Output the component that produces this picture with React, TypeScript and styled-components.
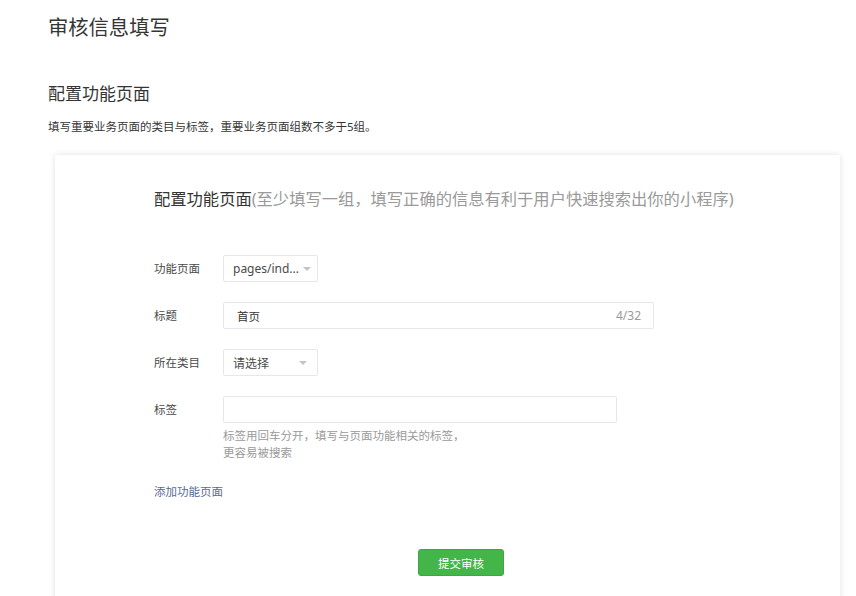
import React from "react"
import styled, { createGlobalStyle } from "styled-components"

const GlobalStyle = createGlobalStyle`
    body {
        margin: 0;
        background: #fff;
        font-family: "Noto Sans", "Noto Sans CJK SC", sans-serif;
        color: #353535;
    }
`

const Page = styled.div`
    padding: 13px 16px 0 48px;
    width: 856px;
    box-sizing: border-box;
`

const PageTitle = styled.h1`
    margin: 0;
    font-size: 20.3px;
    line-height: 28px;
    font-weight: 400;
    color: #353535;
`

const SectionTitle = styled.h2`
    margin: 41px 0 0 0;
    font-size: 17px;
    line-height: 24px;
    font-weight: 400;
    color: #353535;
`

const SectionDesc = styled.p`
    margin: 13px 0 0 0;
    font-size: 11.5px;
    line-height: 16px;
    color: #353535;
`

const Card = styled.section`
    margin: 20px 0 0 7px;
    width: 785px;
    height: 460px;
    box-sizing: border-box;
    background: #fff;
    box-shadow: 0 0 6px rgba(0, 0, 0, 0.12);
    padding: 32px 72px 0 99px;
`

const CardTitle = styled.div`
    font-size: 16.3px;
    line-height: 24px;
    color: #353535;

    span {
        color: #9a9a9a;
    }
`

const Form = styled.div`
    margin-top: 44px;
    display: flex;
    flex-direction: column;
    gap: 20px;
`

const Row = styled.div`
    display: flex;
    align-items: flex-start;
`

const Label = styled.div`
    width: 69px;
    flex-shrink: 0;
    font-size: 11.5px;
    line-height: 27px;
    color: #4a4a4a;
`

const Field = styled.div`
    display: flex;
    flex-direction: column;
`

const Select = styled.div<{ $width: number }>`
    width: ${p => p.$width}px;
    height: 27px;
    box-sizing: border-box;
    border: 1px solid #e7e7eb;
    border-radius: 2px;
    display: flex;
    align-items: center;
    justify-content: space-between;
    padding: 0 10px 0 9px;
    font-size: 12px;
    color: #4a4a4a;

    &::after {
        content: "";
        margin-left: 4px;
        border-left: 4px solid transparent;
        border-right: 4px solid transparent;
        border-top: 4px solid #c4c4c4;
    }
`

const Input = styled.div<{ $width: number }>`
    width: ${p => p.$width}px;
    height: 27px;
    box-sizing: border-box;
    border: 1px solid #e7e7eb;
    border-radius: 2px;
    display: flex;
    align-items: center;
    justify-content: space-between;
    padding: 0 12px 0 13px;
    font-size: 11.5px;
    color: #353535;
`

const Counter = styled.span`
    font-size: 12px;
    color: #9a9a9a;
`

const Hint = styled.div`
    margin-top: 4px;
    font-size: 11.5px;
    line-height: 17px;
    color: #9a9a9a;
`

const AddLink = styled.a`
    display: block;
    margin-top: 22px;
    font-size: 11.5px;
    line-height: 17px;
    color: #576b95;
    text-decoration: none;
`

const Actions = styled.div`
    margin-top: 49px;
    display: flex;
    justify-content: center;
`

const SubmitButton = styled.button`
    width: 86px;
    height: 27px;
    border: 1px solid #3ca642;
    border-radius: 3px;
    background: #44b549;
    color: #fff;
    font-family: inherit;
    font-size: 11.5px;
    cursor: pointer;
`

const App: React.FC = () => {
    return <Page>
        <GlobalStyle />
        <PageTitle>审核信息填写</PageTitle>
        <SectionTitle>配置功能页面</SectionTitle>
        <SectionDesc>填写重要业务页面的类目与标签，重要业务页面组数不多于5组。</SectionDesc>
        <Card>
            <CardTitle>配置功能页面<span>(至少填写一组，填写正确的信息有利于用户快速搜索出你的小程序)</span></CardTitle>
            <Form>
                <Row>
                    <Label>功能页面</Label>
                    <Select $width={95}>pages/ind...</Select>
                </Row>
                <Row>
                    <Label>标题</Label>
                    <Input $width={431}>首页<Counter>4/32</Counter></Input>
                </Row>
                <Row>
                    <Label>所在类目</Label>
                    <Select $width={95}>请选择</Select>
                </Row>
                <Row>
                    <Label>标签</Label>
                    <Field>
                        <Input $width={394} />
                        <Hint>标签用回车分开，填写与页面功能相关的标签，<br />更容易被搜索</Hint>
                    </Field>
                </Row>
            </Form>
            <AddLink href="#">添加功能页面</AddLink>
            <Actions>
                <SubmitButton>提交审核</SubmitButton>
            </Actions>
        </Card>
    </Page>
}

export default App
